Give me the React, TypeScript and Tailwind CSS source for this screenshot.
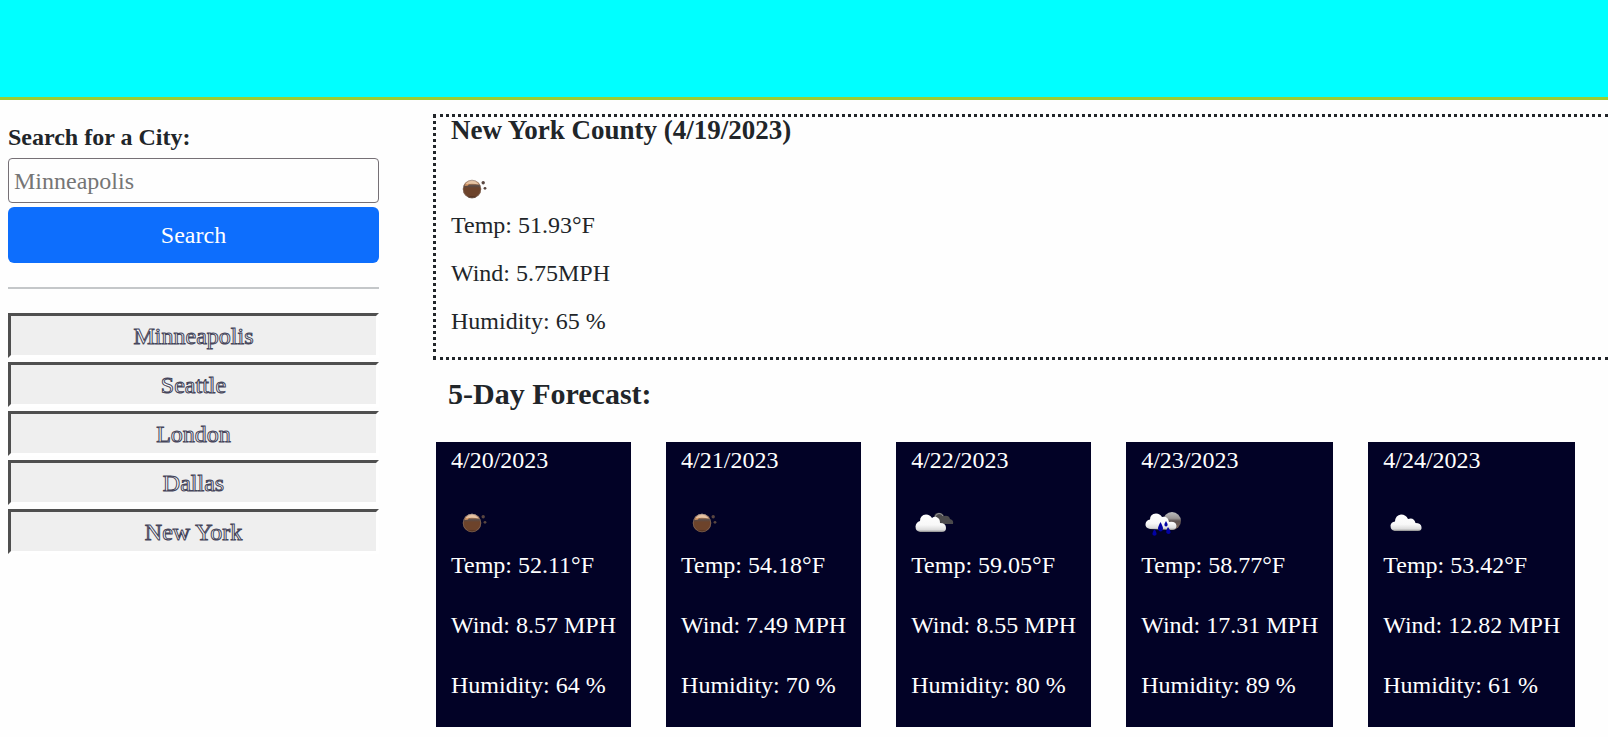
import type { ReactNode } from "react";

type Sky = "clear" | "broken" | "rain" | "cloudy";

const cities = ["Minneapolis", "Seattle", "London", "Dallas", "New York"];

const forecast: { date: string; sky: Sky; temp: string; wind: string; humidity: number }[] = [
  { date: "4/20/2023", sky: "clear", temp: "52.11", wind: "8.57", humidity: 64 },
  { date: "4/21/2023", sky: "clear", temp: "54.18", wind: "7.49", humidity: 70 },
  { date: "4/22/2023", sky: "broken", temp: "59.05", wind: "8.55", humidity: 80 },
  { date: "4/23/2023", sky: "rain", temp: "58.77", wind: "17.31", humidity: 89 },
  { date: "4/24/2023", sky: "cloudy", temp: "53.42", wind: "12.82", humidity: 61 },
];

const drawings: Record<Sky, ReactNode> = {
  clear: (
    <>
      <circle cx="21" cy="24" r="9.2" fill="url(#moon)" />
      <circle cx="21" cy="24" r="8.8" fill="none" stroke="#8b7568" strokeWidth="0.8" opacity="0.7" />
      <path d="M14 19.500 Q17 16 21 16 Q25 16 28 19.500 Q21 17.800 14 19.500Z" fill="#e6c3a3" />
      <path d="M13.200 21 Q15 18.800 18 18.600 L17 20.500Z" fill="#e09a62" />
      <circle cx="32.200" cy="17.800" r="1.700" fill="#594640" />
      <circle cx="34" cy="23.300" r="1.400" fill="#594640" />
    </>
  ),
  broken: (
    <>
      <path d="M24 20 Q22 15 26 14 Q31 13 33 17 Q38 16 39 20 Q43 21 42 25 H27Z" fill="#4b4a4c" />
      <path d="M24 18 Q25 14.500 28 14.500 Q31 14.500 32 17" fill="none" stroke="#98979b" strokeWidth="1" />
      <path
        d="M9 33 Q4.500 32 4.500 27.500 Q5 23 9 22 Q9 16 15 15.500 Q19 15.500 21 19 Q24 16.500 27 19 Q29 20 29 24 Q35 24 35 29 Q35 33 31 33Z"
        fill="url(#cloud)"
      />
    </>
  ),
  rain: (
    <>
      <circle cx="31" cy="22" r="9" fill="url(#veiled)" />
      <path
        d="M9 30 Q4 29 4.500 25 Q5 21 9 20.500 Q9 15 15 14.500 Q19 14.500 21 18 Q27 17 28 23 Q35 22 35.500 27 Q35 31 31 31Z"
        fill="url(#cloud)"
      />
      <path
        d="M19.500 23 Q17 27.500 17 29.500 Q17.500 32.500 19.500 32.500 Q22 32 22 29.500 Q22 27.500 19.500 23Z M25 22 Q23 25 23.500 26.500 Q25 28.500 26.500 26.500 Q27 25 25 22Z M27 28 Q24.500 32 25.500 34 Q27.500 36 29.500 34 Q30 32 27 28Z M13.500 30 Q11 34 11.500 35.500 Q13.500 38 15.500 35.500 Q16 34 13.500 30Z"
        fill="#0202a3"
      />
    </>
  ),
  cloudy: (
    <path
      d="M11.500 32 Q7.500 31 7.500 26.500 Q8 23 12 22.500 Q12.500 16 18 15.500 Q23 15.500 25 20 Q31 18 32.500 24 Q38 24 38.500 28 Q39 32 35 32Z"
      fill="url(#cloud)"
    />
  ),
};

function SkyIcon({ sky }: { sky: Sky }) {
  return (
    <svg viewBox="0 0 50 48" className="block h-12 w-[50px]" role="img" aria-label={sky}>
      {drawings[sky]}
    </svg>
  );
}

function IconPaints() {
  return (
    <svg width="0" height="0" className="absolute" aria-hidden="true">
      <defs>
        <linearGradient id="moon" x1="0" y1="0" x2="0" y2="1">
          <stop offset="0" stopColor="#e9d8cc" />
          <stop offset="0.2" stopColor="#b98055" />
          <stop offset="0.32" stopColor="#594b48" />
          <stop offset="0.45" stopColor="#6d432b" />
          <stop offset="0.85" stopColor="#6d432b" />
          <stop offset="1" stopColor="#3a1f14" />
        </linearGradient>
        <linearGradient id="veiled" x1="0" y1="0" x2="0" y2="1">
          <stop offset="0" stopColor="#bdbdbd" />
          <stop offset="0.35" stopColor="#999594" />
          <stop offset="0.5" stopColor="#5d5250" />
          <stop offset="1" stopColor="#7d6558" />
        </linearGradient>
        <linearGradient id="cloud" x1="0" y1="0" x2="0" y2="1">
          <stop offset="0" stopColor="#ffffff" />
          <stop offset="0.6" stopColor="#f8f8f8" />
          <stop offset="0.88" stopColor="#dcdcdc" />
          <stop offset="1" stopColor="#8a8a8a" />
        </linearGradient>
      </defs>
    </svg>
  );
}

export default function App() {
  return (
    <div className="overflow-x-hidden bg-[#fefefe] font-['Liberation_Serif',serif] text-2xl leading-9 text-[#212529]">
      <IconPaints />
      <header className="h-[100px] border-b-3 border-[#9acd32] bg-[#00ffff]" />
      <div className="flex">
        <aside className="w-[387px] shrink-0 px-2 pt-[19px]">
          <form onSubmit={(e) => e.preventDefault()}>
            <label htmlFor="city" className="mb-[3px] block font-bold">
              Search for a City:
            </label>
            <input
              id="city"
              type="text"
              placeholder="Minneapolis"
              className="mb-1 block h-[45px] w-full rounded border border-[#767076] bg-[#fefefe] px-[5px] pt-0.5 placeholder:text-[#757575]"
            />
            <button type="submit" className="block h-14 w-full rounded-md bg-[#0d6efd] text-white">
              Search
            </button>
          </form>
          <hr className="my-6 border-t-2 border-[#c4c7c9]" />
          <div className="flex flex-col gap-1">
            {cities.map((city) => (
              <button
                key={city}
                type="button"
                className="h-[45px] w-full border-3 border-t-[#4f4f4f] border-r-white border-b-white border-l-[#4f4f4f] bg-[#efefef] text-white [-webkit-text-stroke:1px_#45455a]"
              >
                {city}
              </button>
            ))}
          </div>
        </aside>
        <main className="min-w-0 flex-1 pt-3.5 pb-2.5 pl-[46px]">
          <section className="border-3 border-r-0 border-dotted border-[#212529] pb-[18px] pl-[15px]">
            <h2 className="text-[27px] leading-[27px] font-bold">New York County (4/19/2023)</h2>
            <div className="mt-[27px] flex h-9 items-center">
              <SkyIcon sky="clear" />
            </div>
            <div className="flex flex-col gap-3">
              <p>Temp: 51.93°F</p>
              <p>Wind: 5.75MPH</p>
              <p>Humidity: 65 %</p>
            </div>
          </section>
          <h2 className="mt-4 pl-[15px] text-[30px] leading-9 font-bold">5-Day Forecast:</h2>
          <div className="mt-[30px] flex gap-[35px] pl-[3px]">
            {forecast.map((day) => (
              <article key={day.date} className="shrink-0 bg-[#020226] px-[15px] pb-6 text-white">
                <h3>{day.date}</h3>
                <div className="mt-[21px]">
                  <SkyIcon sky={day.sky} />
                </div>
                <div className="flex flex-col gap-6">
                  <p>Temp: {day.temp}°F</p>
                  <p>Wind: {day.wind} MPH</p>
                  <p>Humidity: {day.humidity} %</p>
                </div>
              </article>
            ))}
          </div>
        </main>
      </div>
    </div>
  );
}
